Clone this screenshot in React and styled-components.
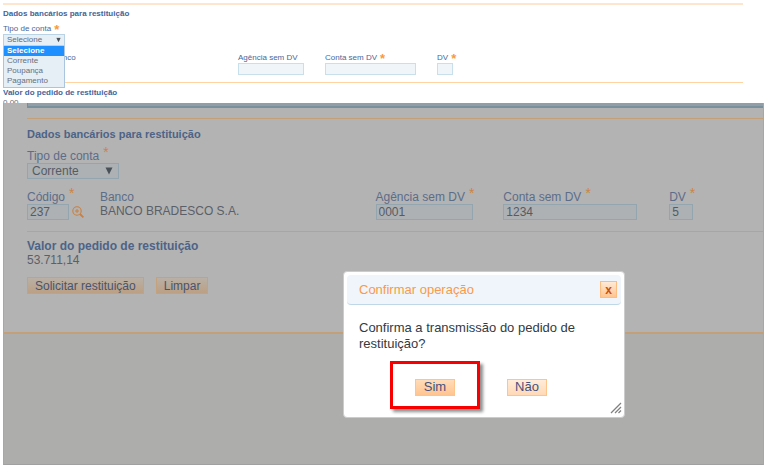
import React from "react";
import styled, { createGlobalStyle, css } from "styled-components";

const GlobalStyle = createGlobalStyle`
  * { box-sizing: border-box; }
  body {
    margin: 0;
    background: #fff;
    font-family: "Liberation Sans", Arial, sans-serif;
  }
  input, select, button { font-family: inherit; margin: 0; }
`;

const Page = styled.main`
  padding: 0 4px 2px 3px;
`;

/* Empty form, compact */

const Preview = styled.section`
  height: 103px;
  overflow: hidden;
  padding: 3px 21px 0 0;
  font-size: 8px;
  line-height: 10px;
  color: #4a6698;
`;

const Rule = styled.hr`
  margin: 0;
  border: 0;
  height: ${(p) => (p.$thick ? "2px" : "1px")};
  background: ${(p) => (p.$dim ? "#c4a078" : p.$thick ? "#ffe5cd" : "#ffd3a2")};
`;

const PreviewTitle = styled.h2`
  margin: 0;
  padding-top: ${(p) => p.$gap || "0"};
  font-size: 8px;
  line-height: 10px;
  font-weight: bold;
  color: #45639a;
`;

const Label = styled.label`
  display: flex;
  align-items: center;
  gap: 3px;
  white-space: nowrap;
`;

const Star = styled.span`
  height: 10px;
  font-size: 13px;
  line-height: 12px;
  font-weight: bold;
  color: #f99a3c;
`;

const PreviewType = styled.div`
  position: relative;
  width: 62px;
  padding-top: 5px;
`;

const SelectWrap = styled.div`
  position: relative;
  width: ${(p) => p.$width};
  svg {
    position: absolute;
    right: ${(p) => p.$inset};
    top: 50%;
    transform: translateY(-50%);
    pointer-events: none;
  }
`;

const Select = styled.select`
  display: block;
  width: 100%;
  appearance: none;
  border-radius: 0;
  outline: none;
  ${(p) =>
    p.$dim
      ? css`
          height: 16px;
          padding: 0 4px;
          border: 1px solid #93a6af;
          background: #adb1b4;
          color: #565b63;
          font-size: 12px;
          line-height: 14px;
        `
      : css`
          height: 12px;
          padding: 0 3px;
          border: 1px solid #b9d3e5;
          background: #e6eef6;
          color: #626b7b;
          font-size: 8px;
          line-height: 10px;
        `}
`;

const Options = styled.ul`
  position: absolute;
  z-index: 1;
  top: 100%;
  left: 0;
  right: 0;
  margin: 0;
  padding: 0 0 1px;
  list-style: none;
  border: 1px solid #a9c6de;
  border-top: 0;
  background: #e6eef6;
`;

const Option = styled.li`
  padding: 0 3px;
  line-height: 10px;
  color: ${(p) => (p.$active ? "#fff" : "#66707f")};
  background: ${(p) => (p.$active ? "#1e90ff" : "transparent")};
  font-weight: ${(p) => (p.$active ? "bold" : "normal")};
`;

const PreviewFields = styled.div`
  display: grid;
  grid-template-columns: 50fr 185fr 87fr 112fr 306fr;
  padding: 7px 0;
`;

const Field = styled.div`
  grid-column: ${(p) => p.$column || "auto"};
  min-width: 0;
`;

const PreviewInput = styled.input`
  display: block;
  width: ${(p) => p.$width};
  height: 12px;
  padding: 0 2px;
  border: 1px solid #c8dfec;
  border-radius: 0;
  background: #f0f5fa;
  font-size: 8px;
`;

const PreviewAmount = styled.div`
  color: #6a6e78;
`;

/* Filled form behind the dialog */

const Screen = styled.section`
  position: relative;
  background: #b3b3b3;
  border-left: 1px solid #a7a7a7;
  border-right: 1px solid #a7a7a7;
  border-bottom: 1px solid #a0a0a0;
  font-size: 12px;
  line-height: 14px;
  color: #5c6d8a;
`;

const Form = styled.form`
  padding: 0 0 38px 23px;
`;

const PanelEdge = styled.div`
  height: 5px;
  background: #929ea7;
  border-left: 1px solid #71909d;
  border-bottom: 2px solid #78919d;
  margin-bottom: 10px;
`;

const Title = styled.h2`
  margin: 0;
  padding-top: ${(p) => (p.$large ? "7px" : "8px")};
  font-size: ${(p) => (p.$large ? "12px" : "11px")};
  line-height: 14px;
  font-weight: bold;
  color: #4d6387;
`;

const DimLabel = styled.label`
  display: flex;
  gap: 4px;
  white-space: nowrap;
  padding-top: ${(p) => p.$gap || "0"};
`;

const DimStar = styled.span`
  height: 6px;
  line-height: 6px;
  font-size: 14px;
  color: #cb8445;
`;

const Fields = styled.div`
  display: grid;
  grid-template-columns: 73fr 276fr 128fr 166fr 94fr;
  padding: 11px 0;
`;

const InputRow = styled.div`
  display: flex;
  align-items: center;
  gap: 3px;
`;

const DimInput = styled.input`
  width: ${(p) => p.$width};
  height: 16px;
  padding: 0 2px;
  border: 1px solid #93a6af;
  border-radius: 0;
  background: #adb1b4;
  color: #565b63;
  font-size: 12px;
  outline: none;
`;

const IconButton = styled.button`
  display: flex;
  padding: 0;
  border: 0;
  background: none;
`;

const Value = styled.div`
  color: #5b5f68;
`;

const Actions = styled.div`
  display: flex;
  gap: 12px;
  padding-top: 10px;
`;

const Button = styled.button`
  height: 17px;
  padding: 0 7px;
  border: 1px solid #c4a27e;
  background: linear-gradient(#b9b0a6, #bba084);
  color: #475472;
  font-size: 12px;
  line-height: 14px;
`;

const Footer = styled.div`
  height: 130px;
  background: #adadab;
`;

/* Confirmation dialog */

const Dialog = styled.div`
  position: absolute;
  left: 339px;
  top: 168px;
  width: 282px;
  padding: 3px;
  border: 1px solid #ccc;
  border-radius: 4px;
  background: #fff;
  color: #333a42;
`;

const DialogHeader = styled.header`
  display: flex;
  align-items: center;
  justify-content: space-between;
  height: 30px;
  padding: 0 4px 0 12px;
  border-bottom: 1px solid #bfd8e8;
  border-radius: 4px;
  background: #eff5fa;
`;

const DialogTitle = styled.h3`
  margin: 0;
  font-size: 13px;
  font-weight: normal;
  color: #f99a48;
`;

const CloseButton = styled.button`
  width: 17px;
  height: 17px;
  padding: 0;
  border: 1px solid #fdbd80;
  background: linear-gradient(#ffead7, #ffc590);
  color: #c9500f;
  font-size: 12px;
  line-height: 12px;
  font-weight: bold;
`;

const Message = styled.p`
  margin: 0;
  padding: 15px 12px 9px;
  font-size: 13px;
  line-height: 16px;
`;

const Choices = styled.div`
  display: flex;
  gap: 27px;
  padding: 0 0 5px 43px;
`;

const Choice = styled.div`
  display: flex;
  align-items: center;
  justify-content: center;
  height: 48px;
  padding-top: 4px;
  ${(p) =>
    p.$highlighted &&
    css`
      width: 90px;
      border: 3px solid #f80000;
      box-shadow: 3px 3px 3px #8f8f8f;
    `}
`;

const ChoiceButton = styled.button`
  width: 40px;
  height: 17px;
  padding: 0;
  border: 1px solid #fdc48c;
  background: linear-gradient(${(p) => (p.$strong ? "#ffdcb9, #ffc58f" : "#ffecd9, #ffd9b5")});
  color: #44517f;
  font-size: 13px;
  line-height: 14px;
`;

const Grip = styled.svg`
  position: absolute;
  right: 2px;
  bottom: 3px;
`;

const Arrow = ({ size }) => (
  <svg width={size} height={size} viewBox="0 0 8 8" aria-hidden="true">
    <path d="M0.5 0.5h7L4 7.5z" fill="#4a5058" />
  </svg>
);

const SearchIcon = () => (
  <svg width="12" height="12" viewBox="0 0 12 12" fill="none" stroke="#c98040" aria-hidden="true">
    <circle cx="5" cy="5" r="4.2" strokeWidth="1.1" />
    <path d="M3 5h4M5 3v4" strokeWidth="1" />
    <path d="M8 8l3.400 3.400" strokeWidth="1.8" />
  </svg>
);

const OPTIONS = ["Selecione", "Corrente", "Poupança", "Pagamento"];

function EmptyForm() {
  return (
    <Preview>
      <Rule $thick />
      <PreviewTitle $gap="4px">Dados bancários para restituição</PreviewTitle>
      <PreviewType>
        <Label htmlFor="type-empty">
          Tipo de conta <Star>*</Star>
        </Label>
        <SelectWrap $width="100%" $inset="4px">
          <Select id="type-empty" defaultValue="Selecione">
            {OPTIONS.map((o) => (
              <option key={o}>{o}</option>
            ))}
          </Select>
          <Arrow size={5} />
        </SelectWrap>
        <Options>
          {OPTIONS.map((o, i) => (
            <Option key={o} $active={i === 0}>
              {o}
            </Option>
          ))}
        </Options>
      </PreviewType>
      <PreviewFields>
        <Field $column="2">Banco</Field>
        <Field>
          <Label htmlFor="branch-empty">Agência sem DV</Label>
          <PreviewInput id="branch-empty" $width="66px" />
        </Field>
        <Field>
          <Label htmlFor="account-empty">
            Conta sem DV <Star>*</Star>
          </Label>
          <PreviewInput id="account-empty" $width="91px" />
        </Field>
        <Field>
          <Label htmlFor="digit-empty">
            DV <Star>*</Star>
          </Label>
          <PreviewInput id="digit-empty" $width="16px" />
        </Field>
      </PreviewFields>
      <Rule />
      <PreviewTitle $gap="5px">Valor do pedido de restituição</PreviewTitle>
      <PreviewAmount>0,00</PreviewAmount>
    </Preview>
  );
}

function FilledForm() {
  return (
    <Form onSubmit={(e) => e.preventDefault()}>
      <PanelEdge />
      <Rule $dim />
      <Title>Dados bancários para restituição</Title>
      <DimLabel htmlFor="type" $gap="8px">
        Tipo de conta <DimStar>*</DimStar>
      </DimLabel>
      <SelectWrap $width="92px" $inset="6px">
        <Select id="type" $dim defaultValue="Corrente">
          {OPTIONS.map((o) => (
            <option key={o}>{o}</option>
          ))}
        </Select>
        <Arrow size={8} />
      </SelectWrap>
      <Fields>
        <Field>
          <DimLabel htmlFor="code">
            Código <DimStar>*</DimStar>
          </DimLabel>
          <InputRow>
            <DimInput id="code" $width="42px" defaultValue="237" />
            <IconButton type="button" aria-label="Pesquisar banco">
              <SearchIcon />
            </IconButton>
          </InputRow>
        </Field>
        <Field>
          Banco
          <Value>BANCO BRADESCO S.A.</Value>
        </Field>
        <Field>
          <DimLabel htmlFor="branch">
            Agência sem DV <DimStar>*</DimStar>
          </DimLabel>
          <InputRow>
            <DimInput id="branch" $width="97px" defaultValue="0001" />
          </InputRow>
        </Field>
        <Field>
          <DimLabel htmlFor="account">
            Conta sem DV <DimStar>*</DimStar>
          </DimLabel>
          <InputRow>
            <DimInput id="account" $width="134px" defaultValue="1234" />
          </InputRow>
        </Field>
        <Field>
          <DimLabel htmlFor="digit">
            DV <DimStar>*</DimStar>
          </DimLabel>
          <InputRow>
            <DimInput id="digit" $width="24px" defaultValue="5" />
          </InputRow>
        </Field>
      </Fields>
      <Rule $dim />
      <Title $large>Valor do pedido de restituição</Title>
      <Value>53.711,14</Value>
      <Actions>
        <Button type="submit">Solicitar restituição</Button>
        <Button type="reset">Limpar</Button>
      </Actions>
    </Form>
  );
}

function ConfirmDialog() {
  return (
    <Dialog role="dialog" aria-labelledby="dialog-title">
      <DialogHeader>
        <DialogTitle id="dialog-title">Confirmar operação</DialogTitle>
        <CloseButton>x</CloseButton>
      </DialogHeader>
      <Message>Confirma a transmissão do pedido de restituição?</Message>
      <Choices>
        <Choice $highlighted>
          <ChoiceButton $strong>Sim</ChoiceButton>
        </Choice>
        <Choice>
          <ChoiceButton>Não</ChoiceButton>
        </Choice>
      </Choices>
      <Grip width="12" height="12" viewBox="0 0 12 12" stroke="#808080" strokeWidth="1.3" aria-hidden="true">
        <path d="M1 11L11 1M5 11L11 5M8.500 11L11 8.500" />
      </Grip>
    </Dialog>
  );
}

export default function App() {
  return (
    <>
      <GlobalStyle />
      <Page>
        <EmptyForm />
        <Screen>
          <FilledForm />
          <Rule $dim $thick />
          <Footer />
          <ConfirmDialog />
        </Screen>
      </Page>
    </>
  );
}
